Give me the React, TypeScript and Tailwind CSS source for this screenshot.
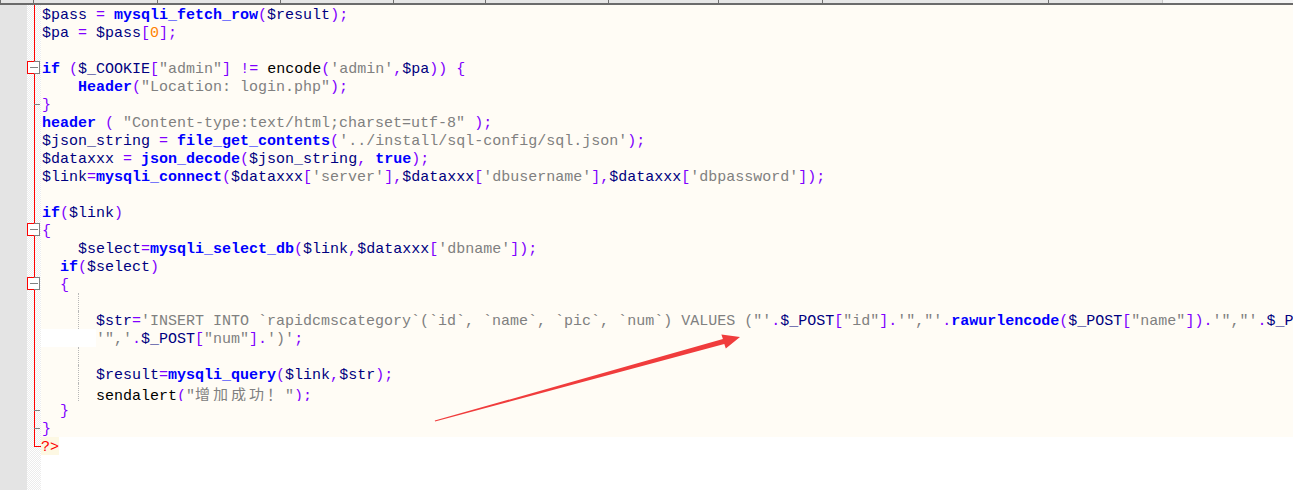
type Kind = "v" | "o" | "f" | "s" | "n" | "d";
type Tok = [string, Kind];

const tone: Record<Kind, string> = {
    v: "text-[#000080]",
    o: "text-[#8000ff]",
    f: "text-[#0000ff] font-bold",
    s: "text-[#808080]",
    n: "text-[#ff8000]",
    d: "text-black",
};

type Row = {
    toks: Tok[];
    guide?: boolean;
    wrap?: boolean;
};

const rows: Row[] = [
    { toks: [["$pass", "v"], [" ", "d"], ["=", "o"], [" ", "d"], ["mysqli_fetch_row", "f"], ["(", "o"], ["$result", "v"], [");", "o"]] },
    { toks: [["$pa", "v"], [" ", "d"], ["=", "o"], [" ", "d"], ["$pass", "v"], ["[", "o"], ["0", "n"], ["];", "o"]] },
    { toks: [] },
    {
        toks: [["if", "f"], [" ", "d"], ["(", "o"], ["$_COOKIE", "v"], ["[", "o"], ['"admin"', "s"], ["]", "o"], [" ", "d"], ["!=", "o"], [" ", "d"],
            ["encode", "d"], ["(", "o"], ["'admin'", "s"], [",", "o"], ["$pa", "v"], ["))", "o"], [" ", "d"], ["{", "o"]]
    },
    { toks: [["    ", "d"], ["Header", "f"], ["(", "o"], ['"Location: login.php"', "s"], [");", "o"]] },
    { toks: [["}", "o"]] },
    { toks: [["header", "f"], [" ", "d"], ["(", "o"], [" ", "d"], ['"Content-type:text/html;charset=utf-8"', "s"], [" ", "d"], [");", "o"]] },
    { toks: [["$json_string", "v"], [" ", "d"], ["=", "o"], [" ", "d"], ["file_get_contents", "f"], ["(", "o"], ["'../install/sql-config/sql.json'", "s"], [");", "o"]] },
    { toks: [["$dataxxx", "v"], [" ", "d"], ["=", "o"], [" ", "d"], ["json_decode", "f"], ["(", "o"], ["$json_string", "v"], [",", "o"], [" ", "d"], ["true", "f"], [");", "o"]] },
    {
        toks: [["$link", "v"], ["=", "o"], ["mysqli_connect", "f"], ["(", "o"], ["$dataxxx", "v"], ["[", "o"], ["'server'", "s"], ["],", "o"],
            ["$dataxxx", "v"], ["[", "o"], ["'dbusername'", "s"], ["],", "o"], ["$dataxxx", "v"], ["[", "o"], ["'dbpassword'", "s"], ["]);", "o"]]
    },
    { toks: [] },
    { toks: [["if", "f"], ["(", "o"], ["$link", "v"], [")", "o"]] },
    { toks: [["{", "o"]] },
    { toks: [["    ", "d"], ["$select", "v"], ["=", "o"], ["mysqli_select_db", "f"], ["(", "o"], ["$link", "v"], [",", "o"], ["$dataxxx", "v"], ["[", "o"], ["'dbname'", "s"], ["]);", "o"]] },
    { toks: [["  ", "d"], ["if", "f"], ["(", "o"], ["$select", "v"], [")", "o"]] },
    { toks: [["  ", "d"], ["{", "o"]] },
    { toks: [], guide: true },
    {
        guide: true,
        toks: [["      ", "d"], ["$str", "v"], ["=", "o"], ["'INSERT INTO `rapidcmscategory`(`id`, `name`, `pic`, `num`) VALUES (\"'", "s"], [".", "o"],
            ["$_POST", "v"], ["[", "o"], ['"id"', "s"], ["]", "o"], [".", "o"], ["'\",\"'", "s"], [".", "o"], ["rawurlencode", "f"], ["(", "o"],
            ["$_POST", "v"], ["[", "o"], ['"name"', "s"], ["])", "o"], [".", "o"], ["'\",\"'", "s"], [".", "o"], ["$_POST", "v"], ["[", "o"], ['"pic"', "s"], ["]", "o"], [".", "o"]]
    },
    { wrap: true, toks: [["'\",'", "s"], [".", "o"], ["$_POST", "v"], ["[", "o"], ['"num"', "s"], ["]", "o"], [".", "o"], ["')'", "s"], [";", "o"]] },
    { toks: [], guide: true },
    { guide: true, toks: [["      ", "d"], ["$result", "v"], ["=", "o"], ["mysqli_query", "f"], ["(", "o"], ["$link", "v"], [",", "o"], ["$str", "v"], [");", "o"]] },
    { guide: true, toks: [["      ", "d"], ["sendalert", "d"], ["(", "o"], ['"', "s"], ["增加成功！", "s"], ['"', "s"], [");", "o"]] },
    { toks: [["  ", "d"], ["}", "o"]] },
    { toks: [["}", "o"]] },
];

const tabs = [33, 124, 123, 113, 92, 123, 110, 104, 226, 114];

function Tokens({ toks }: { toks: Tok[] }) {
    return (
        <>
            {toks.map(([text, kind], i) =>
                /[\u4e00-\u9fff\uff01]/.test(text) ? (
                    <span key={i} className={`${tone[kind]} font-['Noto_Sans_CJK_SC',sans-serif] tracking-[3px]`}>{text}</span>
                ) : (
                    <span key={i} className={tone[kind]}>{text}</span>
                )
            )}
        </>
    );
}

function FoldMargin() {
    const box = (top: number) => (
        <g key={top}>
            <rect x={0.5} y={top + 2.5} width={12} height={12} fill="#ffffff" stroke="#808080" />
            <polyline points={`7,${top + 2.5} 0.5,${top + 2.5} 0.5,${top + 14.5} 7,${top + 14.5}`} fill="none" stroke="#ff0000" />
            <line x1={3} y1={top + 8.5} x2={11} y2={top + 8.5} stroke="#808080" />
        </g>
    );
    const tick = (row: number) => (
        <line key={row} x1={7} y1={row * 18 + 9.5} x2={13} y2={row * 18 + 9.5} stroke="#808080" />
    );
    return (
        <svg width={14} height={485} className="block">
            <line x1={7.5} y1={0} x2={7.5} y2={24 * 18 + 9} stroke="#ff0000" />
            <line x1={7} y1={24 * 18 + 9.5} x2={14} y2={24 * 18 + 9.5} stroke="#ff0000" />
            {[3, 12, 15].map(r => box(r * 18))}
            {[5, 22, 23].map(r => tick(r))}
        </svg>
    );
}

export default function App() {
    return (
        <div className="relative w-[1293px] h-[490px] overflow-hidden bg-white flex flex-col font-['Liberation_Mono',monospace] text-[15px]">
            <div className="h-[3px] flex bg-[#f4f4f4]">
                {tabs.map((w, i) => (
                    <div key={i} className="h-full border-l border-[#6f6f6f] bg-[#e6e6e6]" style={{ width: w }} />
                ))}
                <div className="flex-1 border-l border-[#c8c8c8]" />
            </div>
            <div className="h-[2px] bg-[#6b6b6b]" />

            <div className="flex flex-1 min-h-0">
                <div className="w-[27px] bg-[#e4e4e4]" />
                <div className="w-[14px] bg-[image:repeating-conic-gradient(#ececec_0%_25%,#ffffff_0%_50%)] bg-[length:2px_2px]">
                    <FoldMargin />
                </div>

                <div className="flex-1 flex flex-col min-w-0 overflow-hidden">
                    {rows.map((row, i) =>
                        row.wrap ? (
                            <div key={i} className="h-[18px] leading-[22px] flex whitespace-pre">
                                <div className="w-[55px] bg-white" />
                                <div className="flex-1 bg-[#fffcf5]">
                                    <Tokens toks={row.toks} />
                                </div>
                            </div>
                        ) : (
                            <div key={i} className="relative h-[18px] leading-[22px] pl-px whitespace-pre bg-[#fffcf5]">
                                {row.guide && (
                                    <div className="absolute left-[37px] top-0 h-full border-l border-dotted border-[#b8b8b8]" />
                                )}
                                <Tokens toks={row.toks} />
                            </div>
                        )
                    )}
                    <div className="h-[18px] leading-[22px] whitespace-pre">
                        <span className="inline-block h-[18px] bg-[#fdf8e3] text-[#ff0000]">?&gt;</span>
                    </div>
                    <div className="flex-1 bg-white" />
                </div>
            </div>

            <svg className="absolute left-0 top-0 pointer-events-none" width={1293} height={490}>
                <polygon
                    points="435,421.5 724.3,343.9 725.8,348.6 740,337 721.4,334.4 722.9,339.1 434.8,420.6"
                    fill="#f03c3c"
                />
            </svg>
        </div>
    );
}
